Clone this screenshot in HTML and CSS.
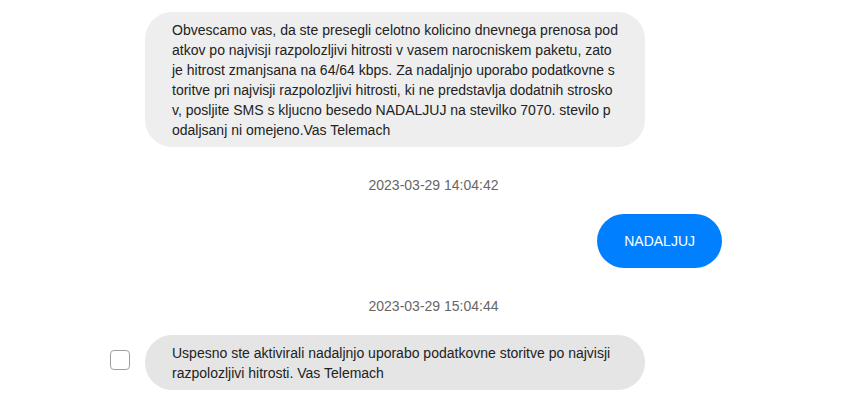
FILE: index.html
```html
<!DOCTYPE html>
<html>
<head>
<meta charset="utf-8">
<link rel="stylesheet" href="styles.css">
</head>
<body>
<div class="chat">
  <div class="row in">
    <div class="select"></div>
    <div class="bubble bubble-in bubble-fixed">Obvescamo vas, da ste presegli celotno kolicino dnevnega prenosa pod<br>atkov po najvisji razpolozljivi hitrosti v vasem narocniskem paketu, zato<br>je hitrost zmanjsana na 64/64 kbps. Za nadaljnjo uporabo podatkovne s<br>toritve pri najvisji razpolozljivi hitrosti, ki ne predstavlja dodatnih strosko<br>v, posljite SMS s kljucno besedo NADALJUJ na stevilko 7070. stevilo p<br>odaljsanj ni omejeno.Vas Telemach</div>
  </div>
  <div class="row stamp-row">
    <div class="select"></div>
    <div class="stamp">2023-03-29 14:04:42</div>
  </div>
  <div class="row out">
    <div class="select"></div>
    <div class="out-wrap"><div class="bubble bubble-out">NADALJUJ</div></div>
  </div>
  <div class="row stamp-row">
    <div class="select"></div>
    <div class="stamp">2023-03-29 15:04:44</div>
  </div>
  <div class="row in last">
    <div class="select"><span class="checkbox"></span></div>
    <div class="bubble bubble-in bubble-last">Uspesno ste aktivirali nadaljnjo uporabo podatkovne storitve po najvisji razpolozljivi hitrosti. Vas Telemach</div>
  </div>
</div>
</body>
</html>
```
FILE: styles.css
```css
html, body {
  margin: 0;
  padding: 0;
  background: #ffffff;
}
body {
  font-family: "Liberation Sans", Arial, sans-serif;
  font-size: 14px;
  line-height: 20px;
  color: #222222;
}
.chat {
  margin-left: 110px;
  width: 612px;
  padding-top: 12px;
}
.row {
  display: grid;
  grid-template-columns: 35px 577px;
  align-items: center;
}
.select {
  display: flex;
  align-items: center;
}
.checkbox {
  display: block;
  width: 18px;
  height: 18px;
  border: 1px solid #a0a0a0;
  border-radius: 4px;
  background: #fff;
  margin-top: -5px;
}
.bubble {
  border-radius: 27px;
}
.bubble-in {
  width: 500px;
  box-sizing: border-box;
  padding: 8px 26px 7px 27px;
  background: #eeeeee;
}
.bubble-fixed {
  white-space: nowrap;
}
.bubble-last {
  background: #e5e5e5;
}
.stamp-row .stamp {
  text-align: center;
  color: #666666;
  margin: 28px 0 19px;
}
.out-wrap {
  display: flex;
  justify-content: flex-end;
}
.bubble-out {
  background: #0080ff;
  color: #ffffff;
  padding: 17px 27px;
  border-radius: 28px;
}
```
